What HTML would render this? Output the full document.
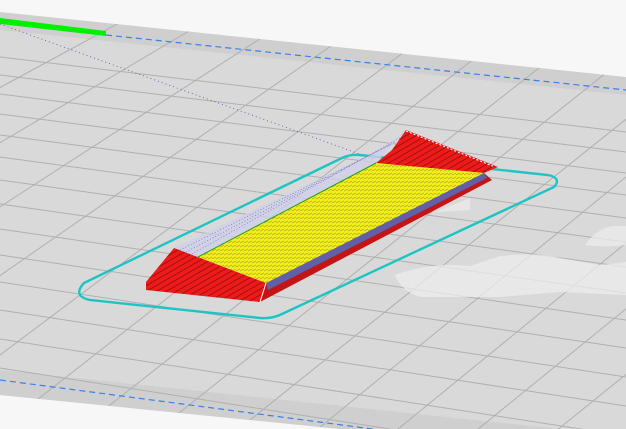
<!DOCTYPE html>
<html><head><style>html,body{margin:0;padding:0;width:626px;height:429px;overflow:hidden;background:#f7f7f7}</style></head>
<body>
<svg width="626" height="429" viewBox="0 0 626 429" xmlns="http://www.w3.org/2000/svg" style="display:block">
<defs>
<clipPath id="plate"><polygon points="0,12 626,77 626,429 340,429 0,395"/></clipPath>
<pattern id="yl" width="4" height="4" patternUnits="userSpaceOnUse"><rect width="4" height="4" fill="#f2ee1a"/><path d="M0 3 L4 1" stroke="#b8b020" stroke-width="0.8"/></pattern>
<pattern id="rd" width="5" height="5" patternUnits="userSpaceOnUse" patternTransform="rotate(60)"><rect width="5" height="5" fill="#ee1a1a"/><rect width="1" height="5" fill="#a01010"/></pattern>
</defs>
<rect width="626" height="429" fill="#f7f7f7"/>
<g clip-path="url(#plate)">
<rect width="626" height="429" fill="#d9d9d9"/>
<polygon points="0,12 626,77 626,95 0,30" fill="#cfcfcf"/>
<polygon points="0,370 626,436 626,429 0,429" fill="#cfcfcf"/>
<g stroke="#b0b0b0" stroke-width="1" fill="none">
<path d="M0 57 L626 132"/><path d="M0 75 L626 152"/><path d="M0 94 L626 173"/><path d="M0 114 L626 195"/>
<path d="M0 135 L626 218"/><path d="M0 157 L626 242"/><path d="M0 180 L626 267"/><path d="M0 204 L626 293"/>
<path d="M0 229 L626 320"/><path d="M0 255 L626 348"/><path d="M0 282 L626 377"/><path d="M0 310 L626 406"/>
<path d="M0 339 L626 436"/><path d="M0 368 L626 466"/>
<path d="M-60 120 L180 -10"/><path d="M-80 190 L250 -5"/><path d="M-90 265 L320 0"/><path d="M-100 345 L390 5"/>
<path d="M-100 430 L460 10"/><path d="M-40 460 L530 15"/><path d="M40 460 L600 20"/><path d="M120 460 L660 30"/>
<path d="M200 460 L700 60"/><path d="M280 460 L720 100"/><path d="M360 460 L740 150"/><path d="M440 460 L760 200"/>
<path d="M520 460 L780 250"/><path d="M600 460 L800 300"/>
</g>
<g fill="#ececec" opacity="0.75">
<path d="M395 275 Q430 262 470 266 L500 256 Q540 252 560 258 L600 265 L626 262 L626 295 L560 292 L500 297 L420 297 Q400 290 395 275Z"/>
<path d="M585 245 Q595 230 612 226 L626 226 L626 245 Q605 248 585 245Z"/>
<path d="M435 212 L470 198 L470 210 Z"/>
</g>
<path d="M106 35 L626 90" stroke="#3a80e8" stroke-width="1.2" stroke-dasharray="6 4"/>
<path d="M0 380 L380 430" stroke="#3a80e8" stroke-width="1.2" stroke-dasharray="6 4"/>
</g>
<polygon points="0,18 106,31 106,36 0,24" fill="#00f000"/>
<path d="M0 24 L376 160" stroke="#5050a0" stroke-width="0.8" stroke-dasharray="1 3"/>
<!-- skirt -->
<path d="M342 158 Q350 154 360 155 L548 175 Q562 178 554 187 L282 314 Q272 319 260 318 L90 300 Q72 296 84 283 Z" fill="none" stroke="#1ec4c4" stroke-width="2.4"/>
<!-- lavender dotted region -->
<polygon points="174,248 198,257 376,163 406,130 380,150" fill="#cfcfe8" opacity="0.8"/>
<g stroke="#7070c0" stroke-width="0.7" stroke-dasharray="1 2"><path d="M180 250 L390 145"/><path d="M186 252 L395 142"/><path d="M192 254 L400 138"/></g>
<!-- red body -->
<polygon points="146,282 174,248 266,283 260,302 146,290" fill="url(#rd)"/>
<polygon points="260,302 266,283 484,173 492,180" fill="#c41414"/>
<polygon points="406,130 498,167 484,173 376,163 392,150" fill="url(#rd)"/>
<polygon points="266,283 484,173 487,178 268,290" fill="#6060a8"/>
<!-- yellow top -->
<polygon points="198,257 266,283 484,173 376,163" fill="url(#yl)"/>
<path d="M198 257 L376 163" stroke="#20a020" stroke-width="1"/>
<path d="M266 283 L260 302" stroke="#fff" stroke-width="1"/>
<path d="M406 131 L495 167" stroke="#fff" stroke-width="1" stroke-dasharray="2 2"/>
</svg>
</body></html>
